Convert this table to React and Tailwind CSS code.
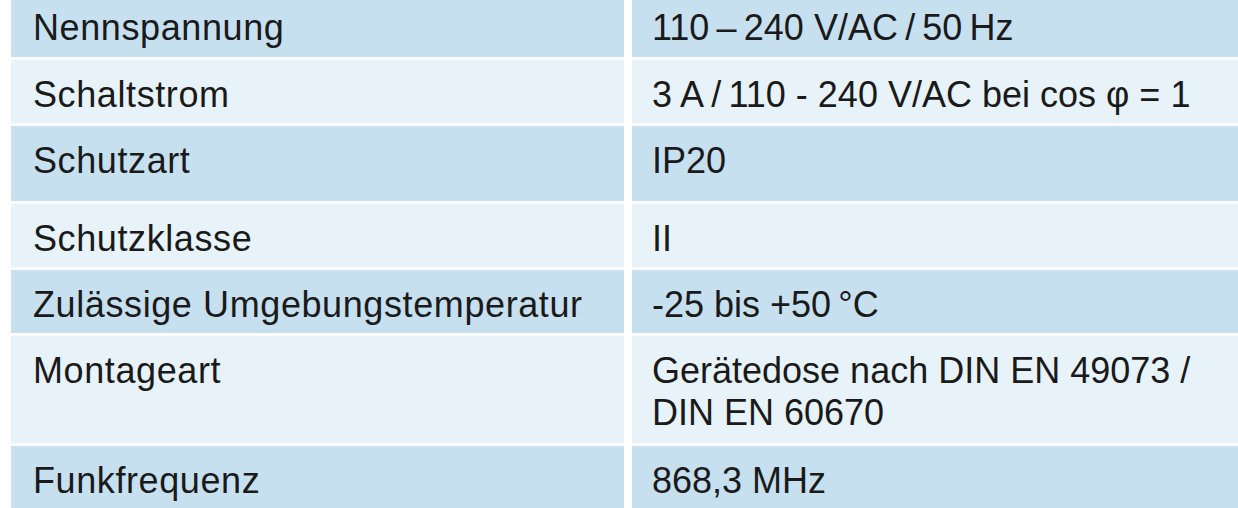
import React from 'react';

const rows = [
  { label: 'Nennspannung', value: ['110\u2009–\u2009240 V/AC\u2009/\u200950\u2009Hz'], h: 'h-[57px]', pt: 'pt-[7px]', dark: true },
  { label: 'Schaltstrom', value: ['3 A\u2009/\u2009110 - 240 V/AC bei cos φ = 1'], h: 'h-[63px]', pt: 'pt-[14px]', dark: false },
  { label: 'Schutzart', value: ['IP20'], h: 'h-[75px]', pt: 'pt-[14px]', dark: true },
  { label: 'Schutzklasse', value: ['II'], h: 'h-[63px]', pt: 'pt-[14px]', dark: false },
  { label: 'Zulässige Umgebungstemperatur', value: ['-25 bis +50\u2009°C'], h: 'h-[63px]', pt: 'pt-[14px]', dark: true },
  { label: 'Montageart', value: ['Gerätedose nach DIN EN 49073 /', 'DIN EN 60670'], h: 'h-[107px]', pt: 'pt-[14px]', dark: false },
  { label: 'Funkfrequenz', value: ['868,3 MHz'], h: 'h-[64px]', pt: 'pt-[14px]', dark: true },
];

const App = () => {
  return (
    <div className="w-[1238px] h-[508px] overflow-hidden bg-white pl-[11px]">
      <div className="flex flex-col gap-[3px] text-[36px] leading-[42px] text-[#1a1a1a] font-['Liberation_Sans',Arial,sans-serif]">
        {rows.map((r) => (
          <div key={r.label} className={`grid grid-cols-[613px_1fr] gap-x-[8px] ${r.h}`}>
            <div className={`${r.dark ? 'bg-[#c7e0f0]' : 'bg-[#e7f2f9]'} pl-[22px] ${r.pt} tracking-[0.6px] whitespace-nowrap`}>
              {r.label}
            </div>
            <div className={`${r.dark ? 'bg-[#c7e0f0]' : 'bg-[#e7f2f9]'} pl-[20px] ${r.pt} whitespace-nowrap`}>
              {r.value.map((v) => (
                <div key={v}>{v}</div>
              ))}
            </div>
          </div>
        ))}
      </div>
    </div>
  );
};

export default App;
